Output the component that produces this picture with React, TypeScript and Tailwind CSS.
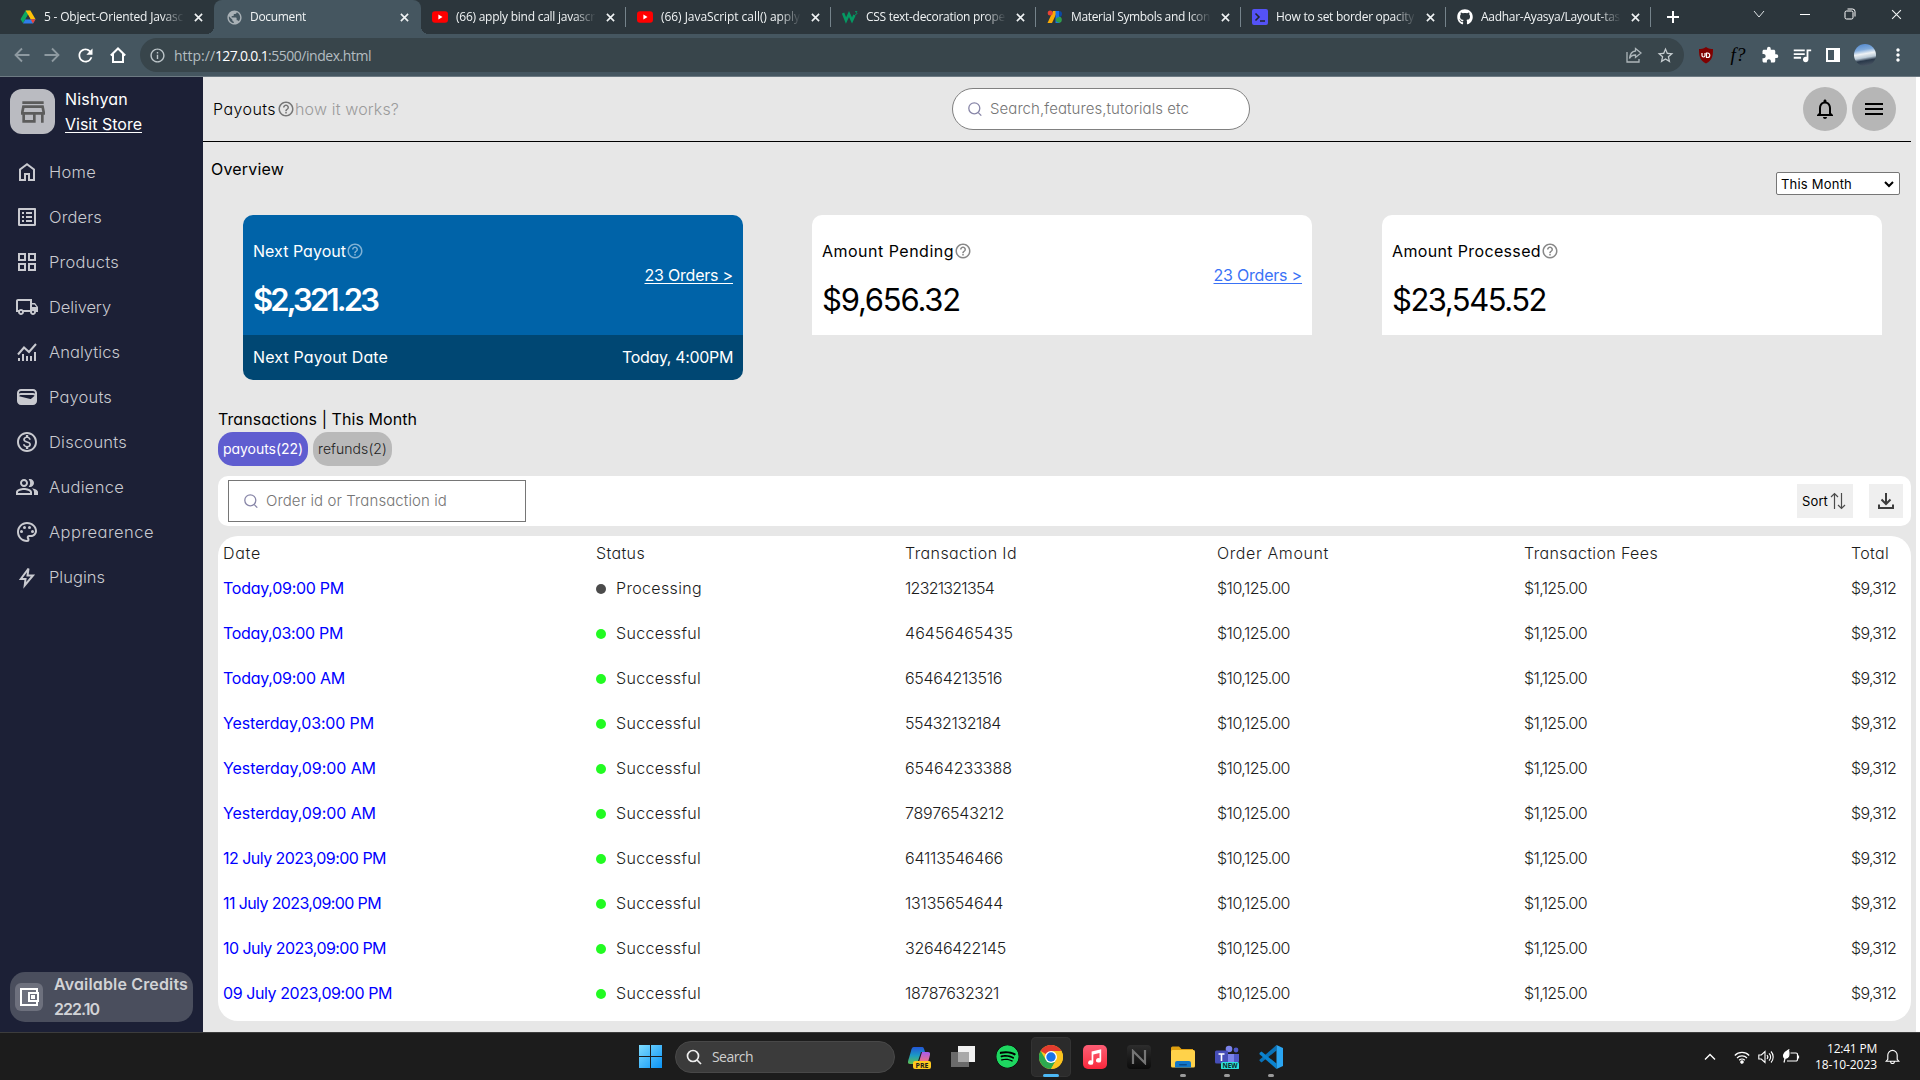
import React, { useLayoutEffect, useRef } from "react";
import {
  MdOutlineListAlt,
  MdOutlineGridView,
  MdOutlineLocalShipping,
  MdWallet,
  MdOutlineMonetizationOn,
  MdOutlinePeopleAlt,
  MdOutlinePalette,
  MdHelpOutline,
  MdNotificationsNone,
  MdMenu,
  MdOutlineStore,
  MdStarBorder,
  MdExtension,
  MdQueueMusic,
  MdRefresh,
  MdPublic,
  MdInfoOutline,
  MdMoreVert,
} from "react-icons/md";
import { FaGithub, FaSpotify } from "react-icons/fa";

/** A single line of text whose tracking is adjusted so that it spans `w` pixels. */
function T({ w, className = "", children }: { w: number; className?: string; children: string }) {
  const ref = useRef<HTMLSpanElement>(null);
  useLayoutEffect(() => {
    const el = ref.current;
    if (!el) return;
    el.style.width = "max-content";
    el.style.letterSpacing = "0px";
    const natural = el.getBoundingClientRect().width;
    el.style.letterSpacing = `${(w - natural) / children.length}px`;
    el.style.width = `${w}px`;
  }, [w, children]);
  return (
    <span ref={ref} className={`inline-block shrink-0 whitespace-nowrap ${className}`}>
      {children}
    </span>
  );
}

/* ---------- browser chrome ---------- */

const Drive = () => (
  <svg viewBox="0 0 16 16" className="size-4">
    <path d="M5.6 1.5h4.8L8 5.7 3 14.3.5 10.2z" fill="#0da960" />
    <path d="M5.6 1.5h4.8l5.1 8.7h-4.9z" fill="#ffc107" />
    <path d="M5.4 10.2h10.1L13 14.4H3z" fill="#2f7de9" />
    <path d="M10.6 10.2h4.9L13 14.4z" fill="#ea4335" />
    <path d="M8 6.2l2.4 4H5.6z" fill="#2c363c" />
  </svg>
);
const YouTube = () => (
  <svg viewBox="0 0 16 16" className="size-4">
    <rect y="2.3" width="16" height="11.4" rx="3" fill="#f00" />
    <path d="M6.4 5.6v4.8L10.5 8z" fill="#fff" />
  </svg>
);
const W3 = () => (
  <svg viewBox="0 0 16 16" className="size-4" fill="none" stroke="#059862">
    <path d="M1 4l3 7.500 3-6.500 3 6.500 2.500-5.500" strokeWidth="2.600" />
    <path d="M13 2.600h2l-1 1.200c1.600 0 1 2.200-1 1.500" strokeWidth="0.900" />
  </svg>
);
const GFonts = () => (
  <svg viewBox="0 0 16 16" className="size-4">
    <path d="M6 2h4.500L5 14H.5z" fill="#fbab05" />
    <circle cx="3.200" cy="4" r="2.500" fill="#ea4335" />
    <path d="M8.500 2h3.500v12H8.500z" fill="#1a73e8" />
    <path d="M12 2a3 3 0 010 6z" fill="#0d47a1" />
    <path d="M12 7.500a3.300 3.300 0 010 6.500z" fill="#34a853" />
    <circle cx="11.500" cy="10.800" r="2.600" fill="#2e9e4b" />
  </svg>
);
const Terminal = () => (
  <svg viewBox="0 0 16 16" className="size-4">
    <rect width="16" height="16" rx="2" fill="#5452f6" />
    <path d="M3.500 4.500L7 8l-3.500 3.500M8 12h5" stroke="#20262b" strokeWidth="1.600" fill="none" />
  </svg>
);

const tabs: { icon: React.ReactNode; title: string; w: number }[] = [
  { icon: <Drive />, title: "5 - Object-Oriented Javasc", w: 139 },
  { icon: <MdPublic className="size-[17px] text-[#a9b1b6]" />, title: "Document", w: 56 },
  { icon: <YouTube />, title: "(66) apply bind call javascr", w: 139 },
  { icon: <YouTube />, title: "(66) JavaScript call() apply ", w: 139 },
  { icon: <W3 />, title: "CSS text-decoration prope", w: 139 },
  { icon: <GFonts />, title: "Material Symbols and Icon", w: 139 },
  { icon: <Terminal />, title: "How to set border opacity", w: 138 },
  { icon: <FaGithub className="size-4 text-white" />, title: "Aadhar-Ayasya/Layout-tas", w: 139 },
];

const X = ({ className }: { className: string }) => (
  <svg viewBox="0 0 10 10" className={className} stroke="currentColor" fill="none">
    <path d="M1 1l8 8M9 1l-8 8" />
  </svg>
);

function TabBar() {
  return (
    <div className="flex h-[34px] bg-[#2c363c] pl-[10px] text-[#f0f3f4]">
      {tabs.map((t, i) => {
        const active = i === 1;
        const box = i === 0 ? "w-[204px] pl-[10px]" : active ? "w-[207px] pl-[12px] rounded-t-lg bg-[#455660]" : "w-[205px] pl-[11px]";
        return (
          <div key={i} className={`relative flex shrink-0 items-center ${box}`}>
            {active && (
              <>
                <span className="absolute -left-2 bottom-0 size-2 bg-[radial-gradient(circle_at_0_0,#2c363c_8px,#455660_8px)]" />
                <span className="absolute -right-2 bottom-0 size-2 bg-[radial-gradient(circle_at_100%_0,#2c363c_8px,#455660_8px)]" />
              </>
            )}
            <span className="flex w-[24px] shrink-0">{t.icon}</span>
            <span className="w-[140px] overflow-hidden text-[12px] leading-4 [mask-image:linear-gradient(to_right,#000_118px,transparent_140px)]">
              <T w={t.w}>{t.title}</T>
            </span>
            <X className="ml-[10px] size-[9px] shrink-0 stroke-[1.8]" />
            {i > 1 && <span className="ml-auto h-5 w-px bg-[#75838b]" />}
          </div>
        );
      })}
      <svg viewBox="0 0 14 14" className="ml-[15px] mt-[10px] size-[14px]" stroke="#fff" strokeWidth="2">
        <path d="M7 1v12M1 7h12" />
      </svg>
      <div className="ml-auto mr-[18px] flex h-7 w-[149px] items-center justify-between">
        <svg viewBox="0 0 12 12" className="size-3" stroke="#dfe4e6" fill="none">
          <path d="M1 3l5 6 5-6" />
        </svg>
        <span className="h-px w-[10px] bg-white" />
        <svg viewBox="0 0 12 12" className="size-3" stroke="#fff" fill="none">
          <rect x="1" y="3" width="8" height="8" rx="1.500" />
          <path d="M3.500 1h5a2.500 2.500 0 012.500 2.500v5" />
        </svg>
        <X className="size-[11px] stroke-1" />
      </div>
    </div>
  );
}

function Toolbar() {
  return (
    <div className="flex h-[43px] items-center border-b border-[#6d7a83] bg-[#455660] text-white">
      <div className="ml-[14px] flex w-[112px] items-center justify-between">
        <svg viewBox="0 0 16 16" className="size-4" stroke="#8e9aa1" strokeWidth="1.800" fill="none">
          <path d="M15.500 8H2M8 1.500L1.500 8 8 14.500" />
        </svg>
        <svg viewBox="0 0 16 16" className="size-4" stroke="#8e9aa1" strokeWidth="1.800" fill="none">
          <path d="M.5 8H14M8 1.500L14.500 8 8 14.500" />
        </svg>
        <MdRefresh className="size-[21px]" />
        <svg viewBox="0 0 16 16" className="size-4" stroke="#fff" strokeWidth="2" fill="none">
          <path d="M.8 8.500L8 1.500l7.200 7M3 7v8h10V7" />
        </svg>
      </div>
      <div className="ml-[14px] flex h-[34px] w-[1544px] items-center rounded-full bg-[#38454b] pl-[9px] pr-[9px]">
        <MdInfoOutline className="size-[17px] text-[#bcc5c9]" />
        <span className="ml-[8px] flex text-[14px] text-[#b4bdc1]">
          <T w={41}>http://</T>
          <T w={53} className="text-white">127.0.0.1</T>
          <T w={103}>:5500/index.html</T>
        </span>
        <svg viewBox="0 0 16 16" className="ml-auto mr-[14px] size-4" stroke="#aeb7bb" strokeWidth="1.300" fill="none">
          <path d="M1 5v10h12v-3M9.500 1.500L15 6l-5.500 4.500V8C6.500 8 4.500 9 3.500 11.500 4 7 6.500 4.300 9.500 4z" />
        </svg>
        <MdStarBorder className="size-[19px] text-[#c5cccf]" />
      </div>
      <div className="ml-[13px] flex items-center">
        <svg viewBox="0 0 18 18" className="size-[18px]">
          <path d="M9 1c3 2 5 2 7 2 0 7-.5 11-7 14.500C2.500 14 2 10 2 3c2 0 4 0 7-2z" fill="#800000" />
          <path d="M5 7v2.500a1.500 1.500 0 003 0V7M9.500 7v4.500h1a2.200 2.200 0 000-4.500z" stroke="#fff" strokeWidth="1.200" fill="none" />
        </svg>
        <span className="w-[46px] text-center font-['Liberation_Serif'] text-[19px] italic leading-5 text-black">f?</span>
        <MdExtension className="size-[18px]" />
        <MdQueueMusic className="ml-[12px] size-[22px]" />
        <span className="ml-[13px] box-border flex h-[14px] w-[14px] border-2 border-r-[6px] border-white" />
        <span className="ml-[14px] size-[22px] rounded-full bg-[linear-gradient(170deg,#4d84cc_0%,#7faadb_28%,#eef2f5_45%,#b9c9d6_60%,#29384a_72%,#55606c_100%)]" />
        <MdMoreVert className="ml-[12px] size-5" />
      </div>
    </div>
  );
}

/* ---------- sidebar ---------- */

const HomeIcon = () => (
  <svg viewBox="0 0 24 24" className="size-6" stroke="currentColor" strokeWidth="2" fill="none">
    <path d="M5 20V9.500L12 4.200l7 5.300V20h-5v-6h-4v6z" />
  </svg>
);
const AnalyticsIcon = () => (
  <svg viewBox="0 0 24 24" className="size-6" stroke="currentColor" strokeWidth="2" fill="none">
    <path d="M4 21v-3M8 21v-7M12 21v-5M16 21v-5M20 21v-9" />
    <path d="M3 14.500l6-7 5 4.500 7-8" />
  </svg>
);
const BoltIcon = () => (
  <svg viewBox="0 0 24 24" className="size-6" stroke="currentColor" strokeWidth="2" fill="none">
    <path d="M13.500 3.500L5.800 14h4.700l-.8 6.500 8.300-10h-5.500z" />
  </svg>
);

const nav: { label: string; w: number; icon: React.ReactNode }[] = [
  { label: "Home", w: 47, icon: <HomeIcon /> },
  { label: "Orders", w: 53, icon: <MdOutlineListAlt /> },
  { label: "Products", w: 70, icon: <MdOutlineGridView /> },
  { label: "Delivery", w: 62, icon: <MdOutlineLocalShipping /> },
  { label: "Analytics", w: 71, icon: <AnalyticsIcon /> },
  { label: "Payouts", w: 63, icon: <MdWallet /> },
  { label: "Discounts", w: 78, icon: <MdOutlineMonetizationOn /> },
  { label: "Audience", w: 75, icon: <MdOutlinePeopleAlt /> },
  { label: "Apprearence", w: 105, icon: <MdOutlinePalette /> },
  { label: "Plugins", w: 56, icon: <BoltIcon /> },
];

function Sidebar() {
  return (
    <aside className="flex w-[203px] shrink-0 flex-col bg-[#1c2036] px-[10px] pb-[10px] pt-3">
      <div className="flex h-[45px] text-white">
        <div className="flex size-[45px] items-center justify-center rounded-[12px] bg-[#babbc1] text-[#5c5c5c]">
          <MdOutlineStore className="size-8" />
        </div>
        <div className="-mt-[2px] ml-[10px] flex flex-col leading-[25px]">
          <T w={63}>Nishyan</T>
          <T w={77} className="underline underline-offset-2">Visit Store</T>
        </div>
      </div>
      <nav className="mt-[15px] flex flex-col text-[#c9cad0]">
        {nav.map((n) => (
          <div key={n.label} className="flex h-[45px] items-center pl-[5px] font-light">
            <span className="flex w-[34px] text-[24px]">{n.icon}</span>
            <T w={n.w} className="text-[16.5px]">{n.label}</T>
          </div>
        ))}
      </nav>
      <div className="mt-auto flex h-[50px] w-[183px] items-center rounded-[15px] bg-[#4a4e5d] pl-[5px]">
        <span className="flex size-7 items-center justify-center rounded-[6px] bg-[#6d707d] text-white">
          <svg viewBox="0 0 24 24" className="size-6" stroke="currentColor" strokeWidth="2" fill="none">
            <path d="M20 7V4H4v16h16v-3" />
            <path d="M12 8h9v8h-9z" />
            <path d="M15 11h2v2h-2z" />
          </svg>
        </span>
        <div className="ml-[11px] flex flex-col font-semibold leading-[25px] text-[#d2d3d6]">
          <T w={134}>Available Credits</T>
          <T w={45}>222.10</T>
        </div>
      </div>
    </aside>
  );
}

/* ---------- main ---------- */

const SearchIcon = () => (
  <svg viewBox="0 0 14 14" className="size-[14px] shrink-0" stroke="#8886a8" strokeWidth="1.300" fill="none">
    <circle cx="6.300" cy="6.300" r="5.500" />
    <path d="M10.300 10.600l3 3" />
  </svg>
);

function CardTop({ title, tw, amount, aw, link, className, amountClass, linkClass, helpClass }: {
  title: string; tw: number; amount: string; aw: number; link?: boolean;
  className: string; amountClass: string; linkClass: string; helpClass: string;
}) {
  return (
    <div className={`flex h-[120px] w-[500px] items-center justify-between px-[10px] ${className}`}>
      <div className="flex flex-col">
        <div className="mt-[13px] flex h-6 items-center">
          <T w={tw}>{title}</T>
          <MdHelpOutline className={`size-[18px] ${helpClass}`} />
        </div>
        <T w={aw} className={`mt-[13px] text-[31px] leading-[48px] ${amountClass}`}>{amount}</T>
      </div>
      {link && <T w={88.500} className={`underline underline-offset-2 ${linkClass}`}>{"23 Orders >"}</T>}
    </div>
  );
}

const rows: [string, number, string, number][] = [
  ["Today,09:00 PM", 121, "12321321354", 89],
  ["Today,03:00 PM", 120, "46456465435", 108],
  ["Today,09:00 AM", 122, "65464213516", 97],
  ["Yesterday,03:00 PM", 151, "55432132184", 96],
  ["Yesterday,09:00 AM", 153, "65464233388", 107],
  ["Yesterday,09:00 AM", 153, "78976543212", 99],
  ["12 July 2023,09:00 PM", 163, "64113546466", 98],
  ["11 July 2023,09:00 PM", 158, "13135654644", 98],
  ["10 July 2023,09:00 PM", 163, "32646422145", 101],
  ["09 July 2023,09:00 PM", 169, "18787632321", 94],
];

const cols = "grid grid-cols-[373px_309px_312px_307px_327px_1fr] items-center pl-[5px] font-light text-[#1c1c1c]";

function Main() {
  return (
    <main className="flex w-[1713px] shrink-0 flex-col bg-[#e7e7e7] pr-[5px] text-black">
      <header className="flex h-[65px] items-center border-b border-black pl-[10px]">
        <T w={63} className="font-light">Payouts</T>
        <MdHelpOutline className="ml-px size-[18px] text-[#777]" />
        <T w={104} className="font-light text-[#9b9b9b]">how it works?</T>
        <div className="ml-[553px] flex h-[42px] w-[298px] items-center rounded-[21px] border border-[#808080] bg-white pl-[15px]">
          <SearchIcon />
          <T w={199} className="ml-[8px] text-[15px] font-light text-[#757575]">Search,features,tutorials etc</T>
        </div>
        <div className="ml-auto mr-[15px] flex gap-[5px]">
          <span className="flex size-11 items-center justify-center rounded-full bg-[#b6b6b6]">
            <MdNotificationsNone className="size-6" />
          </span>
          <span className="flex size-11 items-center justify-center rounded-full bg-[#b6b6b6]">
            <MdMenu className="size-6" />
          </span>
        </div>
      </header>

      <div className="flex h-[73px] justify-between pl-[8px] pr-[11px]">
        <T w={73} className="mt-[15px]">Overview</T>
        <div className="mt-[30px] flex h-[23px] w-[124px] items-center justify-between rounded-[2px] border border-[#767676] bg-white pl-[4px] pr-[5px]">
          <T w={71} className="text-[13px]">This Month</T>
          <svg viewBox="0 0 10 10" className="size-[10px]" stroke="#000" strokeWidth="2" fill="none">
            <path d="M1 3l4 4 4-4" />
          </svg>
        </div>
      </div>

      <section className="flex h-[165px] items-start pl-[40px]">
        <div className="mr-[69px] overflow-hidden rounded-[10px] text-white">
          <CardTop title="Next Payout" tw={93} amount="$2,321.23" aw={124} link className="bg-[#0063a8]" amountClass="font-semibold" linkClass="text-white" helpClass="text-[#7fb1d4]" />
          <div className="flex h-[45px] items-center justify-between bg-[#004773] px-[10px] pb-px">
            <T w={135}>Next Payout Date</T>
            <T w={111}>Today, 4:00PM</T>
          </div>
        </div>
        <CardTop title="Amount Pending" tw={132} amount="$9,656.32" aw={138} link className="mr-[70px] rounded-t-[10px] bg-white" amountClass="" linkClass="text-[#3a72f6]" helpClass="text-[#888]" />
        <CardTop title="Amount Processed" tw={149} amount="$23,545.52" aw={154} className="rounded-t-[10px] bg-white" amountClass="" linkClass="" helpClass="text-[#888]" />
      </section>

      <section className="flex flex-col pl-[15px] pt-[27px]">
        <T w={199} className="leading-[25px]">{"Transactions | This Month"}</T>
        <div className="flex gap-[5px] text-[14px]">
          <span className="flex h-[34px] w-[90px] items-center justify-center rounded-[15px] bg-[#5f5dd0] text-white">
            <T w={80}>payouts(22)</T>
          </span>
          <span className="flex h-[34px] w-[79px] items-center justify-center rounded-[15px] bg-[#b9b9b9] font-light text-[#222]">
            <T w={69}>refunds(2)</T>
          </span>
        </div>

        <div className="mt-[10px] flex h-[50px] items-center rounded-[10px] bg-white pl-[10px] pr-[8px]">
          <div className="flex h-[42px] w-[298px] items-center border border-[#767676] pl-[15px]">
            <SearchIcon />
            <T w={181} className="ml-[8px] text-[15px] font-light text-[#757575]">Order id or Transaction id</T>
          </div>
          <span className="ml-auto flex h-[34px] w-[56px] items-center bg-[#efefef] pl-[5px]">
            <T w={26} className="text-[13px]">Sort</T>
            <svg viewBox="0 0 16 18" className="ml-[2px] h-[18px] w-4" stroke="#4c4c4c" strokeWidth="1.200" fill="none">
              <path d="M4.500 17V1.500M1 5l3.500-3.500L8 5M11.500 1v15.500M8 13l3.500 3.500L15 13" />
            </svg>
          </span>
          <span className="ml-[16px] flex size-[34px] items-center justify-center bg-[#efefef]">
            <svg viewBox="0 0 18 18" className="size-[18px]" stroke="#3c3c3c" strokeWidth="2" fill="none">
              <path d="M9 1v11M4.500 7.500L9 12l4.500-4.500M2 12.500V16h14v-3.500" />
            </svg>
          </span>
        </div>

        <div className="mt-[10px] flex h-[485px] flex-col rounded-[20px] bg-white">
          <div className={`h-[29px] pt-[5px] ${cols}`}>
            <T w={38}>Date</T>
            <T w={49}>Status</T>
            <T w={112}>Transaction Id</T>
            <T w={112}>Order Amount</T>
            <T w={134}>Transaction Fees</T>
            <T w={38}>Total</T>
          </div>
          {rows.map(([date, dw, id, iw], i) => (
            <div key={i} className={`h-[45px] ${cols}`}>
              <T w={dw} className="font-normal text-[#0000ff]">{date}</T>
              <span className="flex items-center">
                <span className={`mr-[10px] mt-[2px] size-[10px] rounded-full ${i === 0 ? "bg-[#4b4b4b]" : "bg-[#22fb22]"}`} />
                <T w={i === 0 ? 86 : 85}>{i === 0 ? "Processing" : "Successful"}</T>
              </span>
              <T w={iw}>{id}</T>
              <T w={73}>$10,125.00</T>
              <T w={63}>$1,125.00</T>
              <T w={45}>$9,312</T>
            </div>
          ))}
        </div>
      </section>
    </main>
  );
}

/* ---------- taskbar ---------- */

const apps: { icon: React.ReactNode; mark?: "dot" | "active" }[] = [
  {
    icon: (
      <svg viewBox="0 0 24 24" className="size-6">
        <defs>
          <linearGradient id="cp1" x1="0" y1="1" x2="0" y2="0"><stop stopColor="#5fc04b" /><stop offset=".5" stopColor="#1c9ac4" /><stop offset="1" stopColor="#2356d8" /></linearGradient>
          <linearGradient id="cp2" x1="0" y1="0" x2="0" y2="1"><stop stopColor="#a55bf0" /><stop offset="1" stopColor="#f2727c" /></linearGradient>
        </defs>
        <path d="M7 2h8c2 0 2 2 3 5h-4L11 16c-1 3-3 3-5 3H3c-3 0-2-3-1-6l2-7c.5-2 1-4 3-4z" fill="url(#cp1)" />
        <path d="M15 7h6c3 0 2 3 1.500 5L21 17h-9z" fill="url(#cp2)" />
        <rect x="6" y="16" width="18" height="8" rx="2" fill="#ffc81f" />
        <text x="15" y="22.600" fontSize="7" fontWeight="700" textAnchor="middle" fill="#1c1c1c">PRE</text>
      </svg>
    ),
  },
  {
    icon: (
      <svg viewBox="0 0 24 24" className="size-6">
        <rect x="7" y="1" width="17" height="16" fill="#f1f1f1" />
        <rect x="0" y="7" width="18" height="15" fill="#6b6b6b" />
        <rect x="7" y="7" width="11" height="10" fill="#a9a9a9" />
      </svg>
    ),
  },
  { icon: <FaSpotify className="size-[23px] rounded-full bg-black text-[#1ed760]" /> },
  {
    mark: "active",
    icon: (
      <svg viewBox="0 0 24 24" className="size-6">
        <circle cx="12" cy="12" r="12" fill="#fcc31e" />
        <path d="M12 12L1.600 6A12 12 0 0122.400 6z" fill="#e33b2e" />
        <path d="M1.600 6A12 12 0 0012 24l5.200-9H7z" fill="#2da94f" />
        <path d="M12 6h10.400A12 12 0 0112 24l5.200-9z" fill="#fcc31e" />
        <circle cx="12" cy="12" r="6" fill="#fff" />
        <circle cx="12" cy="12" r="4.700" fill="#1a73e8" />
      </svg>
    ),
  },
  {
    icon: (
      <span className="flex size-6 items-center justify-center rounded-[5px] bg-gradient-to-b from-[#fb5c74] to-[#fa233b] text-white">
        <svg viewBox="0 0 16 16" className="size-[18px]" fill="currentColor">
          <path d="M5 3l8.500-2v10a2.300 2 0 11-1.500-1.900V4.500L6.500 5.800V13A2.300 2 0 115 11.100z" />
        </svg>
      </span>
    ),
  },
  {
    icon: (
      <span className="flex size-6 items-center justify-center rounded-[4px] bg-gradient-to-b from-[#2d2d2d] to-[#0c0c0c]">
        <svg viewBox="0 0 16 16" className="size-4" stroke="#767676" strokeWidth="2.200" fill="none">
          <path d="M2 15V2l12 12V1" />
        </svg>
      </span>
    ),
  },
  {
    mark: "dot",
    icon: (
      <svg viewBox="0 0 24 24" className="size-6">
        <path d="M0 3a1.500 1.500 0 011.500-1.500H8L10.500 4H22v5H0z" fill="#e0a010" />
        <rect y="5" width="24" height="17.500" rx="1.500" fill="#ffd24a" />
        <path d="M4 22.500V18a2 2 0 012-2h12a2 2 0 012 2v4.500z" fill="#1277c9" />
        <rect x="8" y="19" width="8" height="1.600" rx=".8" fill="#0a4c8c" />
      </svg>
    ),
  },
  {
    mark: "dot",
    icon: (
      <svg viewBox="0 0 24 24" className="size-6">
        <circle cx="14" cy="4" r="3.300" fill="#7b83eb" />
        <circle cx="21" cy="5" r="2.400" fill="#5059c9" />
        <path d="M17 9h7v7a4 4 0 01-7 2z" fill="#5059c9" />
        <path d="M8 9h11v9a6 6 0 01-11 2z" fill="#7b83eb" />
        <rect y="5.500" width="13" height="13" rx="1.500" fill="#464eb8" />
        <path d="M3.500 9h6M6.500 9v7" stroke="#fff" strokeWidth="1.600" />
        <rect x="6" y="17" width="18" height="7.500" rx="1.500" fill="#2ee0dc" />
        <text x="15" y="23.300" fontSize="6.500" fontWeight="700" textAnchor="middle" fill="#0c2b2b">NEW</text>
      </svg>
    ),
  },
  {
    mark: "dot",
    icon: (
      <svg viewBox="0 0 24 24" className="size-6">
        <path d="M17.500 5.500L2.500 17.500.5 15.800v-1L17.500 0z" fill="#0a72b8" />
        <path d="M17.500 18.500L2.500 6.500.5 8v1.200L17.500 24z" fill="#0b83cf" />
        <path d="M17.500 0L24 3v18l-6.500 3z" fill="#2aa5f2" />
      </svg>
    ),
  },
];

function Taskbar() {
  return (
    <footer className="flex h-[48px] items-center border-t border-[#3c3c3c] bg-[#1c1c1c] pl-[639px] text-white">
      <svg viewBox="0 0 23 23" className="size-[23px]">
        <defs>
          <linearGradient id="win" x1="0" y1="0" x2="1" y2="1"><stop stopColor="#7fdcff" /><stop offset="1" stopColor="#0a93f5" /></linearGradient>
        </defs>
        <path d="M0 0h11v11H0zM12 0h11v11H12zM0 12h11v11H0zM12 12h11v11H12z" fill="url(#win)" />
      </svg>
      <div className="ml-[13px] flex h-8 w-[220px] items-center rounded-full border border-[#484848] bg-[#3b3b3b] pl-[10px]">
        <svg viewBox="0 0 16 16" className="size-4" stroke="#eee" strokeWidth="1.700" fill="none">
          <circle cx="7" cy="7" r="5.500" />
          <path d="M11 11l4 4" />
        </svg>
        <T w={41} className="ml-[10px] text-[14px] text-[#cfcfcf]">Search</T>
      </div>
      <div className="ml-[4px] flex gap-1">
        {apps.map((a, i) => (
          <div
            key={i}
            className={`relative flex size-10 items-center justify-center rounded-[5px] ${a.mark === "active" ? "bg-[#2b2b2b] ring-1 ring-inset ring-[#333]" : ""}`}
          >
            {a.icon}
            {a.mark === "active" && <span className="absolute bottom-0 h-[3px] w-4 rounded-full bg-[#4cb8f5]" />}
            {a.mark === "dot" && <span className="absolute bottom-0 h-[3px] w-[6px] rounded-full bg-[#9a9a9a]" />}
          </div>
        ))}
      </div>
      <div className="ml-auto flex items-center pr-[20px]">
        <svg viewBox="0 0 12 12" className="size-3" stroke="#fff" strokeWidth="1.400" fill="none">
          <path d="M1 8.500l5-5 5 5" />
        </svg>
        <svg viewBox="0 0 16 16" className="ml-[18px] size-4" stroke="#fff" strokeWidth="1.200" fill="none">
          <path d="M.8 6.500a10 10 0 0114.400 0M3 9a7 7 0 0110 0M5.200 11.200a4 4 0 015.600 0" />
          <circle cx="8" cy="13" r="1.200" fill="#fff" />
        </svg>
        <svg viewBox="0 0 16 16" className="ml-2 size-4" stroke="#fff" strokeWidth="1.100" fill="none">
          <path d="M.8 6h2.500L7 2.500v11L3.300 10H.8zM9 6a3 3 0 010 4M11 4.300a5 5 0 010 7.400M13 2.500a8 8 0 010 11" />
        </svg>
        <svg viewBox="0 0 18 16" className="ml-2 h-4 w-[18px]" stroke="#fff" strokeWidth="1.200" fill="none">
          <path d="M8.500 4H14a1.500 1.500 0 011.500 1.500v5A1.500 1.500 0 0114 12H5M16.500 6.500v3" />
          <path d="M6.500 1C7.500 6 7 9 3 9.500M3 9.500C0 7 2 3.500 6.500 1L3 9.500 2 13.500" fill="#fff" />
        </svg>
        <div className="ml-[15px] flex flex-col items-end text-[12px] leading-4">
          <T w={50}>12:41 PM</T>
          <T w={62}>18-10-2023</T>
        </div>
        <svg viewBox="0 0 16 16" className="ml-[8px] size-[15px]" stroke="#fff" strokeWidth="1.200" fill="none">
          <path d="M3 11V6.500a5 5 0 0110 0V11l1.700 2H1.300zM6 13.500a2 2 0 004 0" />
        </svg>
      </div>
    </footer>
  );
}

export default function App() {
  return (
    <div className="flex h-[1080px] w-[1920px] flex-col overflow-hidden bg-white font-['Open_Sans','Noto_Sans',sans-serif]">
      <TabBar />
      <Toolbar />
      <div className="flex h-[955px] font-['Inter','Open_Sans',sans-serif] text-[16px] leading-6 [font-feature-settings:'cv11']">
        <Sidebar />
        <Main />
      </div>
      <Taskbar />
    </div>
  );
}
